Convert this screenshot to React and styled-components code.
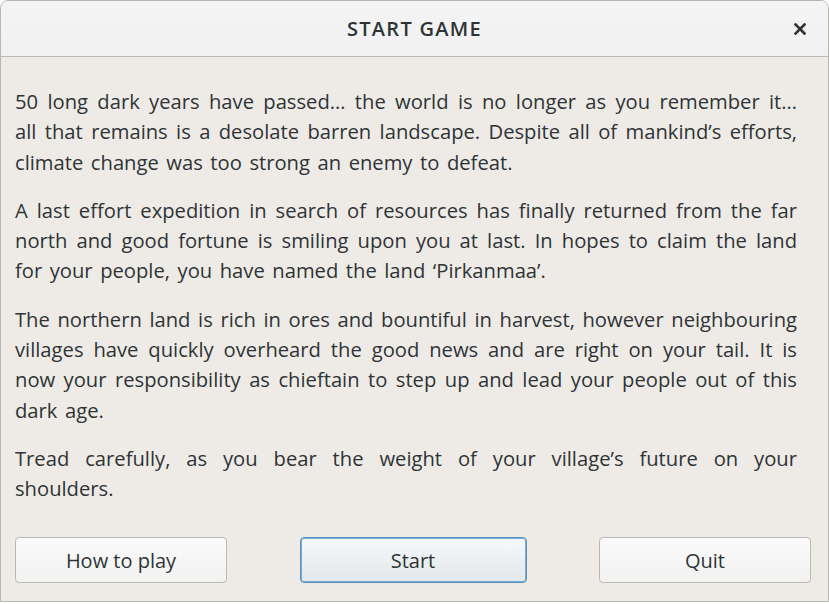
import React from 'react';
import styled, { createGlobalStyle } from 'styled-components';

const GlobalStyle = createGlobalStyle`
    html, body {
        margin: 0;
        padding: 0;
        background: #ffffff;
    }
    body {
        font-family: "Open Sans", "Noto Sans", sans-serif;
    }
`;

const Window = styled.div`
    width: 829px;
    height: 602px;
    box-sizing: border-box;
    display: flex;
    flex-direction: column;
    background: #eeebe7;
    border: 1px solid #b9b5b0;
    border-radius: 8px 8px 0 0;
    overflow: hidden;
`;

const TitleBar = styled.header`
    position: relative;
    height: 56px;
    flex: none;
    display: flex;
    align-items: center;
    justify-content: center;
    background: linear-gradient(#f4f4f4, #f1f1f1);
    border-bottom: 1px solid #bdb8b2;
    box-sizing: border-box;
`;

const Title = styled.h1`
    margin: 0;
    font-size: 20px;
    font-weight: 600;
    color: #2e3436;
    letter-spacing: 1.3px;
`;

const CloseButton = styled.button`
    position: absolute;
    right: 14px;
    top: 50%;
    transform: translateY(-50%);
    width: 28px;
    height: 28px;
    display: flex;
    align-items: center;
    justify-content: center;
    background: none;
    border: 0;
    padding: 0;
    color: #2e3436;
    cursor: pointer;
`;

const Content = styled.main`
    flex: 1;
    display: flex;
    flex-direction: column;
    padding: 29px 17px 0 14px;
`;

const Paragraph = styled.p`
    margin: 0 14px 18px 0;
    font-size: 20.2px;
    word-spacing: 2.3px;
    line-height: 30.3px;
    color: #2e3436;
    text-align: justify;
`;

const Actions = styled.footer`
    display: flex;
    justify-content: space-between;
    margin-top: auto;
    margin-bottom: 18px;
`;

const Button = styled.button`
    width: ${p => (p.$default ? '227px' : '212px')};
    height: 46px;
    box-sizing: border-box;
    border-radius: 4px;
    border: 1px solid ${p => (p.$default ? '#5a93c2' : '#bcb8b3')};
    box-shadow: ${p => (p.$default ? 'inset 0 0 0 1px #7aabd2' : 'none')};
    background: ${p =>
        p.$default
            ? 'linear-gradient(#f7f9fa, #e2e7eb)'
            : 'linear-gradient(#fbfbfb, #f2f2f1)'};
    font-family: inherit;
    font-size: 20px;
    color: #2e3436;
    cursor: pointer;
`;

const CloseIcon = () => (
    <svg width="12" height="12" viewBox="0 0 12 12">
        <path d="M1.5 1.5 L10.5 10.5 M10.5 1.5 L1.5 10.5" stroke="currentColor" strokeWidth="2.6" strokeLinecap="square" />
    </svg>
);

export default () => {
    return (
        <>
            <GlobalStyle />
            <Window>
                <TitleBar>
                    <Title>START GAME</Title>
                    <CloseButton aria-label="Close">
                        <CloseIcon />
                    </CloseButton>
                </TitleBar>
                <Content>
                    <Paragraph>
                        50 long dark years have passed… the world is no longer as you remember it… all that remains is a desolate barren landscape. Despite all of mankind’s efforts, climate change was too strong an enemy to defeat.
                    </Paragraph>
                    <Paragraph>
                        A last effort expedition in search of resources has finally returned from the far north and good fortune is smiling upon you at last. In hopes to claim the land for your people, you have named the land ‘Pirkanmaa’.
                    </Paragraph>
                    <Paragraph>
                        The northern land is rich in ores and bountiful in harvest, however neighbouring villages have quickly overheard the good news and are right on your tail. It is now your responsibility as chieftain to step up and lead your people out of this dark age.
                    </Paragraph>
                    <Paragraph>
                        Tread carefully, as you bear the weight of your village’s future on your shoulders.
                    </Paragraph>
                    <Actions>
                        <Button>How to play</Button>
                        <Button $default>Start</Button>
                        <Button>Quit</Button>
                    </Actions>
                </Content>
            </Window>
        </>
    );
};
